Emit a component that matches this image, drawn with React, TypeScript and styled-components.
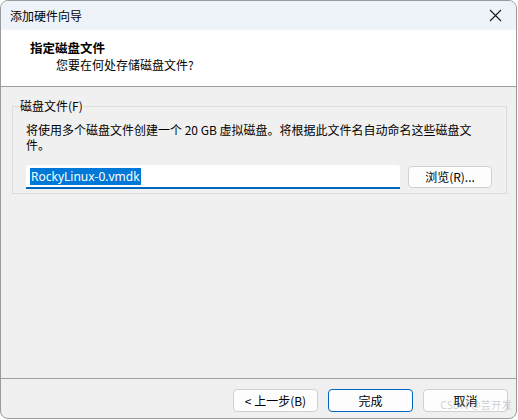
import styled, { createGlobalStyle } from "styled-components";

const GlobalStyle = createGlobalStyle`
  html, body {
    margin: 0;
    padding: 0;
    background: #ffffff;
  }
  body {
    font-family: "Noto Sans CJK SC", "Noto Sans", sans-serif;
    font-size: 12px;
    color: #000;
  }
`;

const Screen = styled.div`
  width: 518px;
  height: 420px;
  position: relative;
  overflow: hidden;
`;

const Window = styled.div`
  box-sizing: border-box;
  width: 517px;
  height: 419px;
  border: 1px solid #9a9a9a;
  border-radius: 8px;
  overflow: hidden;
  display: flex;
  flex-direction: column;
  background: #f0f0f0;
`;

const TitleBar = styled.div`
  height: 29px;
  flex-shrink: 0;
  background: #eef3f9;
  display: flex;
  align-items: center;
  justify-content: space-between;
  padding: 0 14px 0 9px;
  font-size: 12px;
`;

const CloseButton = styled.div`
  width: 14px;
  height: 14px;
  display: flex;
  align-items: center;
  justify-content: center;
`;

const Header = styled.div`
  height: 57px;
  flex-shrink: 0;
  background: #ffffff;
  border-bottom: 1px solid #a0a0a0;
  box-sizing: border-box;
  padding: 9px 0 0 29px;
  display: flex;
  flex-direction: column;
`;

const HeaderTitle = styled.div`
  font-weight: bold;
  font-size: 12.5px;
  line-height: 18px;
`;

const HeaderSub = styled.div`
  padding-left: 26px;
  line-height: 16px;
`;

const Body = styled.div`
  flex: 1;
  padding: 12px 10px 0 11px;
  border-bottom: 1px solid #a0a0a0;
`;

const GroupBox = styled.fieldset`
  margin: 0;
  padding: 0 14px 12px 13px;
  border: 1px solid #dcdcdc;
  border-radius: 0;
  height: 95px;
  box-sizing: border-box;
`;

const Legend = styled.legend`
  padding: 0 1px;
  margin-left: -7px;
  line-height: 14px;
`;

const Description = styled.div`
  line-height: 15px;
  margin-top: 9px;
  max-width: 452px;
`;

const FileRow = styled.div`
  display: flex;
  align-items: flex-start;
  gap: 8px;
  margin-top: 13px;
`;

const FileInput = styled.div`
  box-sizing: border-box;
  width: 374px;
  height: 24px;
  background: #ffffff;
  border-bottom: 2px solid #0067c0;
  border-radius: 3px 3px 0 0;
  padding: 3px 0 0 4px;
  font-family: "Noto Sans", "Liberation Sans", sans-serif;
  font-size: 12px;
`;

const Selected = styled.span`
  background: #0078d7;
  color: #ffffff;
  display: inline-block;
  line-height: 17px;
  padding: 0 1px;
`;

const Button = styled.div<{ $primary?: boolean }>`
  box-sizing: border-box;
  width: 85px;
  height: 23px;
  border: 1px solid ${(p) => (p.$primary ? "#0067c0" : "#d0d0d0")};
  border-radius: 4px;
  background: #fdfdfd;
  display: flex;
  align-items: center;
  justify-content: center;
  font-size: 12px;
  line-height: 1;
`;

const BrowseButton = styled(Button)`
  width: 84px;
  height: 22px;
  margin-top: 1px;
`;

const Footer = styled.div`
  height: 39px;
  flex-shrink: 0;
  display: flex;
  justify-content: flex-end;
  gap: 10px;
  padding: 10px 8px 0 0;
  box-sizing: border-box;
`;

const Watermark = styled.div`
  position: absolute;
  right: 6px;
  bottom: 8px;
  font-size: 10.5px;
  color: rgba(150, 150, 150, 0.45);
  font-family: "Noto Sans", "Noto Sans CJK SC", sans-serif;
  pointer-events: none;
`;

export default function App() {
  return (
    <Screen>
      <GlobalStyle />
      <Window>
        <TitleBar>
          <span>添加硬件向导</span>
          <CloseButton>
            <svg width="13" height="13" viewBox="0 0 13 13">
              <path d="M1 1 L12 12 M12 1 L1 12" stroke="#1a1a1a" strokeWidth="1.1" />
            </svg>
          </CloseButton>
        </TitleBar>
        <Header>
          <HeaderTitle>指定磁盘文件</HeaderTitle>
          <HeaderSub>您要在何处存储磁盘文件?</HeaderSub>
        </Header>
        <Body>
          <GroupBox>
            <Legend>磁盘文件(F)</Legend>
            <Description>
              将使用多个磁盘文件创建一个 20 GB 虚拟磁盘。将根据此文件名自动命名这些磁盘文件。
            </Description>
            <FileRow>
              <FileInput>
                <Selected>RockyLinux-0.vmdk</Selected>
              </FileInput>
              <BrowseButton>浏览(R)...</BrowseButton>
            </FileRow>
          </GroupBox>
        </Body>
        <Footer>
          <Button>&lt; 上一步(B)</Button>
          <Button $primary>完成</Button>
          <Button>取消</Button>
        </Footer>
      </Window>
      <Watermark>CSDN @芸开发</Watermark>
    </Screen>
  );
}
